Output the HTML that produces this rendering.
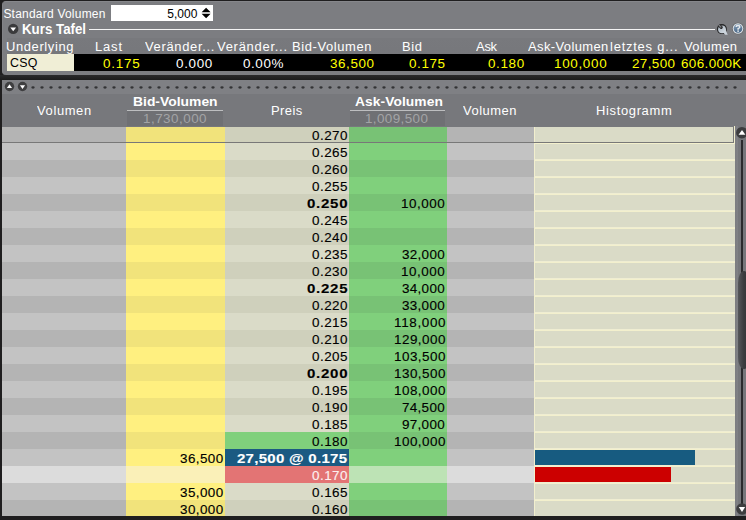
<!DOCTYPE html><html><head><meta charset="utf-8"><style>
*{margin:0;padding:0;box-sizing:border-box}
html,body{width:746px;height:520px;overflow:hidden;background:#1f1e1f;font-family:"Liberation Sans", sans-serif;}
.a{position:absolute}
.t{position:absolute;white-space:pre;font-size:12px;line-height:20px;transform-origin:0 0;}
.b{font-weight:700}
.k{-webkit-text-stroke:0.12px currentColor}
</style></head><body>
<div class="a" style="left:2px;top:1px;width:760px;height:74px;background:#7c7d81;border-radius:4px 0 0 4px;border-top:1px solid #86878b;border-left:1px solid #828387"></div>
<div class="t" style="left:3.4px;top:4px;color:#ffffff;letter-spacing:0.22px;">Standard Volumen</div>
<div class="a" style="left:111px;top:5px;width:102px;height:16px;background:#fff"></div>
<div class="t" style="left:167.2px;top:4px;color:#000000;letter-spacing:0.075px;">5,000</div>
<svg class="a" style="left:200px;top:6px" width="13" height="14"><path d="M1.6 6.2 L6.1 1.8 L10.6 6.2 Z M1.6 7.8 L6.1 12.2 L10.6 7.8 Z" fill="#000"/></svg>
<svg class="a" style="left:7px;top:23px" width="13" height="13"><circle cx="6.2" cy="5.9" r="5.2" fill="#3a3a3c"/><path d="M3.3 4.4 L9.1 4.4 L6.2 8.3 Z" fill="#fff"/></svg>
<div class="t b" style="left:22.2px;top:19px;color:#ffffff;font-size:14px;transform:scaleX(0.95);">Kurs Tafel</div>
<div class="a" style="left:89px;top:29px;width:626px;height:1px;background:#f4f4f4"></div>
<svg class="a" style="left:715px;top:22px" width="14" height="14"><defs><linearGradient id="wg" x1="0" y1="0" x2="1" y2="1"><stop offset="0" stop-color="#a4b0bb"/><stop offset="1" stop-color="#d8dfe6"/></linearGradient><clipPath id="wc"><circle cx="6.9" cy="7.1" r="5.1"/></clipPath></defs><circle cx="6.9" cy="7.1" r="5" fill="#252526"/><path d="M7.6 9.4 L10.4 7.4 L12.7 12.7 L10.2 12.8 Z" fill="#c9d1d9"/><circle cx="7" cy="7.3" r="3.9" fill="url(#wg)"/><g clip-path="url(#wc)"><path d="M6.2 5.4 L1.8 1" stroke="#2a2a2b" stroke-width="3" stroke-linecap="round"/><path d="M5.8 5 L1.4 0.6" stroke="#7c7d81" stroke-width="1.3" stroke-linecap="round"/></g></svg>
<svg class="a" style="left:731px;top:21px" width="14" height="15"><defs><linearGradient id="hg" x1="0" y1="0" x2="0.3" y2="1"><stop offset="0" stop-color="#8aa3ba"/><stop offset="1" stop-color="#4a6888"/></linearGradient></defs><circle cx="7" cy="7.5" r="6" fill="#66686b"/><circle cx="7" cy="7.5" r="5.3" fill="#dde2e6"/><circle cx="7" cy="7.5" r="4.3" fill="url(#hg)"/><path d="M5.2 6.1 Q5.2 4.6 7 4.6 Q8.8 4.6 8.8 6 Q8.8 7 7.1 7.6 L7.1 8.7" fill="none" stroke="#e6eaee" stroke-width="1.5"/><rect x="6.3" y="9.4" width="1.6" height="1.5" fill="#e6eaee"/></svg>
<div class="a" style="left:7px;top:38px;width:739px;height:33px;background:linear-gradient(#78797d,#75767a)"></div>
<div class="t" style="left:6.4px;top:37px;color:#ffffff;letter-spacing:0.568px;transform:scaleX(1.08);">Underlying</div>
<div class="t" style="left:94.6px;top:37px;color:#ffffff;letter-spacing:0.784px;transform:scaleX(1.08);">Last</div>
<div class="t" style="left:144.6px;top:37px;color:#ffffff;letter-spacing:0.614px;transform:scaleX(1.08);">Veränder...</div>
<div class="t" style="left:217.0px;top:37px;color:#ffffff;letter-spacing:0.68px;transform:scaleX(1.08);">Veränder...</div>
<div class="t" style="left:291.9px;top:37px;color:#ffffff;letter-spacing:0.559px;transform:scaleX(1.08);">Bid-Volumen</div>
<div class="t" style="left:402.0px;top:37px;color:#ffffff;letter-spacing:0.565px;transform:scaleX(1.08);">Bid</div>
<div class="t" style="left:476.0px;top:37px;color:#ffffff;letter-spacing:-0.232px;transform:scaleX(1.08);">Ask</div>
<div class="t" style="left:528.1px;top:37px;color:#ffffff;letter-spacing:0.361px;transform:scaleX(1.08);">Ask-Volumen</div>
<div class="t" style="left:610.2px;top:37px;color:#ffffff;letter-spacing:0.713px;transform:scaleX(1.08);">letztes g...</div>
<div class="t" style="left:684.3px;top:37px;color:#ffffff;letter-spacing:0.404px;transform:scaleX(1.08);">Volumen</div>
<div class="a" style="left:7px;top:54px;width:739px;height:17px;background:#000"></div>
<div class="a" style="left:7px;top:54px;width:67px;height:17px;background:#f0eed6"></div>
<div class="t" style="left:10.0px;top:53px;color:#000000;letter-spacing:0.291px;transform:scaleX(1.0308);">CSQ</div>
<div class="t" style="left:102.6px;top:54px;color:#ffff00;letter-spacing:0.67px;transform:scaleX(1.12);">0.175</div>
<div class="t" style="left:176.4px;top:54px;color:#ffffff;letter-spacing:0.602px;transform:scaleX(1.12);">0.000</div>
<div class="t" style="left:243.0px;top:54px;color:#ffffff;letter-spacing:0.517px;transform:scaleX(1.12);">0.00%</div>
<div class="t" style="left:329.8px;top:54px;color:#ffff00;letter-spacing:0.511px;transform:scaleX(1.12);">36,500</div>
<div class="t" style="left:408.6px;top:54px;color:#ffff00;letter-spacing:0.536px;transform:scaleX(1.12);">0.175</div>
<div class="t" style="left:487.8px;top:54px;color:#ffff00;letter-spacing:0.558px;transform:scaleX(1.12);">0.180</div>
<div class="t" style="left:553.9px;top:54px;color:#ffff00;letter-spacing:0.603px;transform:scaleX(1.12);">100,000</div>
<div class="t" style="left:631.5px;top:54px;color:#ffff00;letter-spacing:0.35px;transform:scaleX(1.12);">27,500</div>
<div class="t" style="left:681.4px;top:54px;color:#ffff00;letter-spacing:0.342px;transform:scaleX(1.12);">606.000K</div>
<div class="a" style="left:0;top:75px;width:746px;height:5px;background:linear-gradient(#2a2a2b,#1c1c1c)"></div>
<div class="a" style="left:2px;top:80px;width:760px;height:436px;background:#77787c;overflow:hidden"><div class="a" style="left:0;top:0;width:760px;height:14px;background:#7f8084"></div></div>
<svg class="a" style="left:3px;top:80px" width="26" height="14"><circle cx="6.5" cy="6.5" r="4.7" fill="#3e3e40"/><path d="M3.9 7.9 L9.1 7.9 L6.5 4.3 Z" fill="#fff"/><circle cx="19.5" cy="6.5" r="4.7" fill="#3e3e40"/><path d="M16.9 5.2 L22.1 5.2 L19.5 8.9 Z" fill="#fff"/></svg>
<svg class="a" style="left:0;top:80px" width="746" height="14" viewBox="0 80 746 14"><ellipse cx="33" cy="87.5" rx="1.7" ry="1.15" fill="#333335"/><ellipse cx="42" cy="87.5" rx="1.7" ry="1.15" fill="#333335"/><ellipse cx="51" cy="87.5" rx="1.7" ry="1.15" fill="#333335"/><ellipse cx="60" cy="87.5" rx="1.7" ry="1.15" fill="#333335"/><ellipse cx="69" cy="87.5" rx="1.7" ry="1.15" fill="#333335"/><ellipse cx="78" cy="87.5" rx="1.7" ry="1.15" fill="#333335"/><ellipse cx="87" cy="87.5" rx="1.7" ry="1.15" fill="#333335"/><ellipse cx="96" cy="87.5" rx="1.7" ry="1.15" fill="#333335"/><ellipse cx="105" cy="87.5" rx="1.7" ry="1.15" fill="#333335"/><ellipse cx="114" cy="87.5" rx="1.7" ry="1.15" fill="#333335"/><ellipse cx="123" cy="87.5" rx="1.7" ry="1.15" fill="#333335"/><ellipse cx="132" cy="87.5" rx="1.7" ry="1.15" fill="#333335"/><ellipse cx="141" cy="87.5" rx="1.7" ry="1.15" fill="#333335"/><ellipse cx="150" cy="87.5" rx="1.7" ry="1.15" fill="#333335"/><ellipse cx="159" cy="87.5" rx="1.7" ry="1.15" fill="#333335"/><ellipse cx="168" cy="87.5" rx="1.7" ry="1.15" fill="#333335"/><ellipse cx="177" cy="87.5" rx="1.7" ry="1.15" fill="#333335"/><ellipse cx="186" cy="87.5" rx="1.7" ry="1.15" fill="#333335"/><ellipse cx="195" cy="87.5" rx="1.7" ry="1.15" fill="#333335"/><ellipse cx="204" cy="87.5" rx="1.7" ry="1.15" fill="#333335"/><ellipse cx="213" cy="87.5" rx="1.7" ry="1.15" fill="#333335"/><ellipse cx="222" cy="87.5" rx="1.7" ry="1.15" fill="#333335"/><ellipse cx="231" cy="87.5" rx="1.7" ry="1.15" fill="#333335"/><ellipse cx="240" cy="87.5" rx="1.7" ry="1.15" fill="#333335"/><ellipse cx="249" cy="87.5" rx="1.7" ry="1.15" fill="#333335"/><ellipse cx="258" cy="87.5" rx="1.7" ry="1.15" fill="#333335"/><ellipse cx="267" cy="87.5" rx="1.7" ry="1.15" fill="#333335"/><ellipse cx="276" cy="87.5" rx="1.7" ry="1.15" fill="#333335"/><ellipse cx="285" cy="87.5" rx="1.7" ry="1.15" fill="#333335"/><ellipse cx="294" cy="87.5" rx="1.7" ry="1.15" fill="#333335"/><ellipse cx="303" cy="87.5" rx="1.7" ry="1.15" fill="#333335"/><ellipse cx="312" cy="87.5" rx="1.7" ry="1.15" fill="#333335"/><ellipse cx="321" cy="87.5" rx="1.7" ry="1.15" fill="#333335"/><ellipse cx="330" cy="87.5" rx="1.7" ry="1.15" fill="#333335"/><ellipse cx="339" cy="87.5" rx="1.7" ry="1.15" fill="#333335"/><ellipse cx="348" cy="87.5" rx="1.7" ry="1.15" fill="#333335"/><ellipse cx="357" cy="87.5" rx="1.7" ry="1.15" fill="#333335"/><ellipse cx="366" cy="87.5" rx="1.7" ry="1.15" fill="#333335"/><ellipse cx="375" cy="87.5" rx="1.7" ry="1.15" fill="#333335"/><ellipse cx="384" cy="87.5" rx="1.7" ry="1.15" fill="#333335"/><ellipse cx="393" cy="87.5" rx="1.7" ry="1.15" fill="#333335"/><ellipse cx="402" cy="87.5" rx="1.7" ry="1.15" fill="#333335"/><ellipse cx="411" cy="87.5" rx="1.7" ry="1.15" fill="#333335"/><ellipse cx="420" cy="87.5" rx="1.7" ry="1.15" fill="#333335"/><ellipse cx="429" cy="87.5" rx="1.7" ry="1.15" fill="#333335"/><ellipse cx="438" cy="87.5" rx="1.7" ry="1.15" fill="#333335"/><ellipse cx="447" cy="87.5" rx="1.7" ry="1.15" fill="#333335"/><ellipse cx="456" cy="87.5" rx="1.7" ry="1.15" fill="#333335"/><ellipse cx="465" cy="87.5" rx="1.7" ry="1.15" fill="#333335"/><ellipse cx="474" cy="87.5" rx="1.7" ry="1.15" fill="#333335"/><ellipse cx="483" cy="87.5" rx="1.7" ry="1.15" fill="#333335"/><ellipse cx="492" cy="87.5" rx="1.7" ry="1.15" fill="#333335"/><ellipse cx="501" cy="87.5" rx="1.7" ry="1.15" fill="#333335"/><ellipse cx="510" cy="87.5" rx="1.7" ry="1.15" fill="#333335"/><ellipse cx="519" cy="87.5" rx="1.7" ry="1.15" fill="#333335"/><ellipse cx="528" cy="87.5" rx="1.7" ry="1.15" fill="#333335"/><ellipse cx="537" cy="87.5" rx="1.7" ry="1.15" fill="#333335"/><ellipse cx="546" cy="87.5" rx="1.7" ry="1.15" fill="#333335"/><ellipse cx="555" cy="87.5" rx="1.7" ry="1.15" fill="#333335"/><ellipse cx="564" cy="87.5" rx="1.7" ry="1.15" fill="#333335"/><ellipse cx="573" cy="87.5" rx="1.7" ry="1.15" fill="#333335"/><ellipse cx="582" cy="87.5" rx="1.7" ry="1.15" fill="#333335"/><ellipse cx="591" cy="87.5" rx="1.7" ry="1.15" fill="#333335"/><ellipse cx="600" cy="87.5" rx="1.7" ry="1.15" fill="#333335"/><ellipse cx="609" cy="87.5" rx="1.7" ry="1.15" fill="#333335"/><ellipse cx="618" cy="87.5" rx="1.7" ry="1.15" fill="#333335"/><ellipse cx="627" cy="87.5" rx="1.7" ry="1.15" fill="#333335"/><ellipse cx="636" cy="87.5" rx="1.7" ry="1.15" fill="#333335"/><ellipse cx="645" cy="87.5" rx="1.7" ry="1.15" fill="#333335"/><ellipse cx="654" cy="87.5" rx="1.7" ry="1.15" fill="#333335"/><ellipse cx="663" cy="87.5" rx="1.7" ry="1.15" fill="#333335"/><ellipse cx="672" cy="87.5" rx="1.7" ry="1.15" fill="#333335"/><ellipse cx="681" cy="87.5" rx="1.7" ry="1.15" fill="#333335"/><ellipse cx="690" cy="87.5" rx="1.7" ry="1.15" fill="#333335"/><ellipse cx="699" cy="87.5" rx="1.7" ry="1.15" fill="#333335"/><ellipse cx="708" cy="87.5" rx="1.7" ry="1.15" fill="#333335"/><ellipse cx="717" cy="87.5" rx="1.7" ry="1.15" fill="#333335"/><ellipse cx="726" cy="87.5" rx="1.7" ry="1.15" fill="#333335"/><ellipse cx="735" cy="87.5" rx="1.7" ry="1.15" fill="#333335"/></svg>
<div class="t" style="left:37.1px;top:101px;color:#ffffff;letter-spacing:0.574px;transform:scaleX(1.08);">Volumen</div>
<div class="t" style="left:271.1px;top:101px;color:#ffffff;letter-spacing:0.397px;transform:scaleX(1.08);">Preis</div>
<div class="t" style="left:463.0px;top:101px;color:#ffffff;letter-spacing:0.481px;transform:scaleX(1.08);">Volumen</div>
<div class="t" style="left:596.3px;top:101px;color:#ffffff;letter-spacing:0.603px;transform:scaleX(1.08);">Histogramm</div>
<div class="a" style="left:127px;top:110px;width:96px;height:16px;background:#6f7074;border-top:1px solid #bdbec0"></div>
<div class="a" style="left:350px;top:110px;width:95px;height:16px;background:#6f7074;border-top:1px solid #bdbec0"></div>
<div class="t b" style="left:132.5px;top:92px;color:#ffffff;font-size:13px;letter-spacing:0.018px;transform:scaleX(1.0654);">Bid-Volumen</div>
<div class="t b" style="left:354.5px;top:92px;color:#ffffff;font-size:13px;letter-spacing:0.076px;transform:scaleX(1.0598);">Ask-Volumen</div>
<div class="t" style="left:143.3px;top:109px;color:#a3a4a6;letter-spacing:0.42px;transform:scaleX(1.12);">1,730,000</div>
<div class="t" style="left:365.4px;top:109px;color:#a3a4a6;letter-spacing:0.342px;transform:scaleX(1.12);">1,009,500</div>
<div class="a" style="left:2px;top:127px;width:124px;height:15px;background:#b4b4b4"></div>
<div class="a" style="left:126px;top:127px;width:99px;height:15px;background:#f1e37b"></div>
<div class="a" style="left:225px;top:127px;width:124px;height:15px;background:#cfd0bc"></div>
<div class="a" style="left:349px;top:127px;width:98px;height:15px;background:#78c275"></div>
<div class="a" style="left:447px;top:127px;width:87px;height:15px;background:#b4b4b4"></div>
<div class="a" style="left:2px;top:143px;width:124px;height:17px;background:#c3c3c3"></div>
<div class="a" style="left:126px;top:143px;width:99px;height:17px;background:#fff080"></div>
<div class="a" style="left:225px;top:143px;width:124px;height:17px;background:#dadbc8"></div>
<div class="a" style="left:349px;top:143px;width:98px;height:17px;background:#80d07c"></div>
<div class="a" style="left:447px;top:143px;width:87px;height:17px;background:#c3c3c3"></div>
<div class="a" style="left:2px;top:160px;width:124px;height:17px;background:#b4b4b4"></div>
<div class="a" style="left:126px;top:160px;width:99px;height:17px;background:#f1e37b"></div>
<div class="a" style="left:225px;top:160px;width:124px;height:17px;background:#cfd0bc"></div>
<div class="a" style="left:349px;top:160px;width:98px;height:17px;background:#78c275"></div>
<div class="a" style="left:447px;top:160px;width:87px;height:17px;background:#b4b4b4"></div>
<div class="a" style="left:2px;top:177px;width:124px;height:17px;background:#c3c3c3"></div>
<div class="a" style="left:126px;top:177px;width:99px;height:17px;background:#fff080"></div>
<div class="a" style="left:225px;top:177px;width:124px;height:17px;background:#dadbc8"></div>
<div class="a" style="left:349px;top:177px;width:98px;height:17px;background:#80d07c"></div>
<div class="a" style="left:447px;top:177px;width:87px;height:17px;background:#c3c3c3"></div>
<div class="a" style="left:2px;top:194px;width:124px;height:17px;background:#b4b4b4"></div>
<div class="a" style="left:126px;top:194px;width:99px;height:17px;background:#f1e37b"></div>
<div class="a" style="left:225px;top:194px;width:124px;height:17px;background:#cfd0bc"></div>
<div class="a" style="left:349px;top:194px;width:98px;height:17px;background:#78c275"></div>
<div class="a" style="left:447px;top:194px;width:87px;height:17px;background:#b4b4b4"></div>
<div class="a" style="left:2px;top:211px;width:124px;height:17px;background:#c3c3c3"></div>
<div class="a" style="left:126px;top:211px;width:99px;height:17px;background:#fff080"></div>
<div class="a" style="left:225px;top:211px;width:124px;height:17px;background:#dadbc8"></div>
<div class="a" style="left:349px;top:211px;width:98px;height:17px;background:#80d07c"></div>
<div class="a" style="left:447px;top:211px;width:87px;height:17px;background:#c3c3c3"></div>
<div class="a" style="left:2px;top:228px;width:124px;height:17px;background:#b4b4b4"></div>
<div class="a" style="left:126px;top:228px;width:99px;height:17px;background:#f1e37b"></div>
<div class="a" style="left:225px;top:228px;width:124px;height:17px;background:#cfd0bc"></div>
<div class="a" style="left:349px;top:228px;width:98px;height:17px;background:#78c275"></div>
<div class="a" style="left:447px;top:228px;width:87px;height:17px;background:#b4b4b4"></div>
<div class="a" style="left:2px;top:245px;width:124px;height:17px;background:#c3c3c3"></div>
<div class="a" style="left:126px;top:245px;width:99px;height:17px;background:#fff080"></div>
<div class="a" style="left:225px;top:245px;width:124px;height:17px;background:#dadbc8"></div>
<div class="a" style="left:349px;top:245px;width:98px;height:17px;background:#80d07c"></div>
<div class="a" style="left:447px;top:245px;width:87px;height:17px;background:#c3c3c3"></div>
<div class="a" style="left:2px;top:262px;width:124px;height:17px;background:#b4b4b4"></div>
<div class="a" style="left:126px;top:262px;width:99px;height:17px;background:#f1e37b"></div>
<div class="a" style="left:225px;top:262px;width:124px;height:17px;background:#cfd0bc"></div>
<div class="a" style="left:349px;top:262px;width:98px;height:17px;background:#78c275"></div>
<div class="a" style="left:447px;top:262px;width:87px;height:17px;background:#b4b4b4"></div>
<div class="a" style="left:2px;top:279px;width:124px;height:17px;background:#c3c3c3"></div>
<div class="a" style="left:126px;top:279px;width:99px;height:17px;background:#fff080"></div>
<div class="a" style="left:225px;top:279px;width:124px;height:17px;background:#dadbc8"></div>
<div class="a" style="left:349px;top:279px;width:98px;height:17px;background:#80d07c"></div>
<div class="a" style="left:447px;top:279px;width:87px;height:17px;background:#c3c3c3"></div>
<div class="a" style="left:2px;top:296px;width:124px;height:17px;background:#b4b4b4"></div>
<div class="a" style="left:126px;top:296px;width:99px;height:17px;background:#f1e37b"></div>
<div class="a" style="left:225px;top:296px;width:124px;height:17px;background:#cfd0bc"></div>
<div class="a" style="left:349px;top:296px;width:98px;height:17px;background:#78c275"></div>
<div class="a" style="left:447px;top:296px;width:87px;height:17px;background:#b4b4b4"></div>
<div class="a" style="left:2px;top:313px;width:124px;height:17px;background:#c3c3c3"></div>
<div class="a" style="left:126px;top:313px;width:99px;height:17px;background:#fff080"></div>
<div class="a" style="left:225px;top:313px;width:124px;height:17px;background:#dadbc8"></div>
<div class="a" style="left:349px;top:313px;width:98px;height:17px;background:#80d07c"></div>
<div class="a" style="left:447px;top:313px;width:87px;height:17px;background:#c3c3c3"></div>
<div class="a" style="left:2px;top:330px;width:124px;height:17px;background:#b4b4b4"></div>
<div class="a" style="left:126px;top:330px;width:99px;height:17px;background:#f1e37b"></div>
<div class="a" style="left:225px;top:330px;width:124px;height:17px;background:#cfd0bc"></div>
<div class="a" style="left:349px;top:330px;width:98px;height:17px;background:#78c275"></div>
<div class="a" style="left:447px;top:330px;width:87px;height:17px;background:#b4b4b4"></div>
<div class="a" style="left:2px;top:347px;width:124px;height:17px;background:#c3c3c3"></div>
<div class="a" style="left:126px;top:347px;width:99px;height:17px;background:#fff080"></div>
<div class="a" style="left:225px;top:347px;width:124px;height:17px;background:#dadbc8"></div>
<div class="a" style="left:349px;top:347px;width:98px;height:17px;background:#80d07c"></div>
<div class="a" style="left:447px;top:347px;width:87px;height:17px;background:#c3c3c3"></div>
<div class="a" style="left:2px;top:364px;width:124px;height:17px;background:#b4b4b4"></div>
<div class="a" style="left:126px;top:364px;width:99px;height:17px;background:#f1e37b"></div>
<div class="a" style="left:225px;top:364px;width:124px;height:17px;background:#cfd0bc"></div>
<div class="a" style="left:349px;top:364px;width:98px;height:17px;background:#78c275"></div>
<div class="a" style="left:447px;top:364px;width:87px;height:17px;background:#b4b4b4"></div>
<div class="a" style="left:2px;top:381px;width:124px;height:17px;background:#c3c3c3"></div>
<div class="a" style="left:126px;top:381px;width:99px;height:17px;background:#fff080"></div>
<div class="a" style="left:225px;top:381px;width:124px;height:17px;background:#dadbc8"></div>
<div class="a" style="left:349px;top:381px;width:98px;height:17px;background:#80d07c"></div>
<div class="a" style="left:447px;top:381px;width:87px;height:17px;background:#c3c3c3"></div>
<div class="a" style="left:2px;top:398px;width:124px;height:17px;background:#b4b4b4"></div>
<div class="a" style="left:126px;top:398px;width:99px;height:17px;background:#f1e37b"></div>
<div class="a" style="left:225px;top:398px;width:124px;height:17px;background:#cfd0bc"></div>
<div class="a" style="left:349px;top:398px;width:98px;height:17px;background:#78c275"></div>
<div class="a" style="left:447px;top:398px;width:87px;height:17px;background:#b4b4b4"></div>
<div class="a" style="left:2px;top:415px;width:124px;height:17px;background:#c3c3c3"></div>
<div class="a" style="left:126px;top:415px;width:99px;height:17px;background:#fff080"></div>
<div class="a" style="left:225px;top:415px;width:124px;height:17px;background:#dadbc8"></div>
<div class="a" style="left:349px;top:415px;width:98px;height:17px;background:#80d07c"></div>
<div class="a" style="left:447px;top:415px;width:87px;height:17px;background:#c3c3c3"></div>
<div class="a" style="left:2px;top:432px;width:124px;height:17px;background:#b4b4b4"></div>
<div class="a" style="left:126px;top:432px;width:99px;height:17px;background:#f1e37b"></div>
<div class="a" style="left:225px;top:432px;width:124px;height:17px;background:#80d07c"></div>
<div class="a" style="left:349px;top:432px;width:98px;height:17px;background:#78c275"></div>
<div class="a" style="left:447px;top:432px;width:87px;height:17px;background:#b4b4b4"></div>
<div class="a" style="left:2px;top:449px;width:124px;height:17px;background:#c3c3c3"></div>
<div class="a" style="left:126px;top:449px;width:99px;height:17px;background:#fff080"></div>
<div class="a" style="left:225px;top:449px;width:124px;height:17px;background:#1b5a82"></div>
<div class="a" style="left:349px;top:449px;width:98px;height:17px;background:#80d07c"></div>
<div class="a" style="left:447px;top:449px;width:87px;height:17px;background:#c3c3c3"></div>
<div class="a" style="left:2px;top:466px;width:124px;height:17px;background:#dcdcdc"></div>
<div class="a" style="left:126px;top:466px;width:99px;height:17px;background:#faf0b8"></div>
<div class="a" style="left:225px;top:466px;width:124px;height:17px;background:#e37474"></div>
<div class="a" style="left:349px;top:466px;width:98px;height:17px;background:#bde3b5"></div>
<div class="a" style="left:447px;top:466px;width:87px;height:17px;background:#dcdcdc"></div>
<div class="a" style="left:2px;top:483px;width:124px;height:17px;background:#c3c3c3"></div>
<div class="a" style="left:126px;top:483px;width:99px;height:17px;background:#fff080"></div>
<div class="a" style="left:225px;top:483px;width:124px;height:17px;background:#dadbc8"></div>
<div class="a" style="left:349px;top:483px;width:98px;height:17px;background:#80d07c"></div>
<div class="a" style="left:447px;top:483px;width:87px;height:17px;background:#c3c3c3"></div>
<div class="a" style="left:2px;top:500px;width:124px;height:16px;background:#b4b4b4"></div>
<div class="a" style="left:126px;top:500px;width:99px;height:16px;background:#f1e37b"></div>
<div class="a" style="left:225px;top:500px;width:124px;height:16px;background:#cfd0bc"></div>
<div class="a" style="left:349px;top:500px;width:98px;height:16px;background:#78c275"></div>
<div class="a" style="left:447px;top:500px;width:87px;height:16px;background:#b4b4b4"></div>
<div class="a" style="left:534px;top:127px;width:201px;height:389px;background:#dadbc7"></div>
<div class="a" style="left:734px;top:126px;width:1px;height:17px;background:#f2efce"></div>
<div class="a" style="left:534px;top:127px;width:1px;height:389px;background:#f2efce"></div>
<div class="a" style="left:534px;top:143px;width:201px;height:1px;background:#f3f0cd"></div>
<div class="a" style="left:534px;top:159px;width:201px;height:1px;background:#efedd2"></div>
<div class="a" style="left:534px;top:160px;width:201px;height:1px;background:#f3f0cd"></div>
<div class="a" style="left:534px;top:176px;width:201px;height:1px;background:#efedd2"></div>
<div class="a" style="left:534px;top:177px;width:201px;height:1px;background:#f3f0cd"></div>
<div class="a" style="left:534px;top:193px;width:201px;height:1px;background:#efedd2"></div>
<div class="a" style="left:534px;top:194px;width:201px;height:1px;background:#f3f0cd"></div>
<div class="a" style="left:534px;top:210px;width:201px;height:1px;background:#efedd2"></div>
<div class="a" style="left:534px;top:211px;width:201px;height:1px;background:#f3f0cd"></div>
<div class="a" style="left:534px;top:227px;width:201px;height:1px;background:#efedd2"></div>
<div class="a" style="left:534px;top:228px;width:201px;height:1px;background:#f3f0cd"></div>
<div class="a" style="left:534px;top:244px;width:201px;height:1px;background:#efedd2"></div>
<div class="a" style="left:534px;top:245px;width:201px;height:1px;background:#f3f0cd"></div>
<div class="a" style="left:534px;top:261px;width:201px;height:1px;background:#efedd2"></div>
<div class="a" style="left:534px;top:262px;width:201px;height:1px;background:#f3f0cd"></div>
<div class="a" style="left:534px;top:278px;width:201px;height:1px;background:#efedd2"></div>
<div class="a" style="left:534px;top:279px;width:201px;height:1px;background:#f3f0cd"></div>
<div class="a" style="left:534px;top:295px;width:201px;height:1px;background:#efedd2"></div>
<div class="a" style="left:534px;top:296px;width:201px;height:1px;background:#f3f0cd"></div>
<div class="a" style="left:534px;top:312px;width:201px;height:1px;background:#efedd2"></div>
<div class="a" style="left:534px;top:313px;width:201px;height:1px;background:#f3f0cd"></div>
<div class="a" style="left:534px;top:329px;width:201px;height:1px;background:#efedd2"></div>
<div class="a" style="left:534px;top:330px;width:201px;height:1px;background:#f3f0cd"></div>
<div class="a" style="left:534px;top:346px;width:201px;height:1px;background:#efedd2"></div>
<div class="a" style="left:534px;top:347px;width:201px;height:1px;background:#f3f0cd"></div>
<div class="a" style="left:534px;top:363px;width:201px;height:1px;background:#efedd2"></div>
<div class="a" style="left:534px;top:364px;width:201px;height:1px;background:#f3f0cd"></div>
<div class="a" style="left:534px;top:380px;width:201px;height:1px;background:#efedd2"></div>
<div class="a" style="left:534px;top:381px;width:201px;height:1px;background:#f3f0cd"></div>
<div class="a" style="left:534px;top:397px;width:201px;height:1px;background:#efedd2"></div>
<div class="a" style="left:534px;top:398px;width:201px;height:1px;background:#f3f0cd"></div>
<div class="a" style="left:534px;top:414px;width:201px;height:1px;background:#efedd2"></div>
<div class="a" style="left:534px;top:415px;width:201px;height:1px;background:#f3f0cd"></div>
<div class="a" style="left:534px;top:431px;width:201px;height:1px;background:#efedd2"></div>
<div class="a" style="left:534px;top:432px;width:201px;height:1px;background:#f3f0cd"></div>
<div class="a" style="left:534px;top:448px;width:201px;height:1px;background:#efedd2"></div>
<div class="a" style="left:534px;top:449px;width:201px;height:1px;background:#f3f0cd"></div>
<div class="a" style="left:534px;top:465px;width:201px;height:1px;background:#efedd2"></div>
<div class="a" style="left:534px;top:466px;width:201px;height:1px;background:#f3f0cd"></div>
<div class="a" style="left:534px;top:482px;width:201px;height:1px;background:#efedd2"></div>
<div class="a" style="left:534px;top:483px;width:201px;height:1px;background:#f3f0cd"></div>
<div class="a" style="left:534px;top:499px;width:201px;height:1px;background:#efedd2"></div>
<div class="a" style="left:534px;top:500px;width:201px;height:1px;background:#f3f0cd"></div>
<div class="t k" style="left:311.7px;top:126px;color:#000000;letter-spacing:0.424px;transform:scaleX(1.12);">0.270</div>
<div class="t k" style="left:311.7px;top:143px;color:#000000;letter-spacing:0.424px;transform:scaleX(1.12);">0.265</div>
<div class="t k" style="left:311.7px;top:160px;color:#000000;letter-spacing:0.424px;transform:scaleX(1.12);">0.260</div>
<div class="t k" style="left:311.7px;top:177px;color:#000000;letter-spacing:0.424px;transform:scaleX(1.12);">0.255</div>
<div class="t b k" style="left:307.3px;top:194px;color:#000000;letter-spacing:0.6px;transform:scaleX(1.25);">0.250</div>
<div class="t k" style="left:401.4px;top:194px;color:#000000;letter-spacing:0.479px;transform:scaleX(1.12);">10,000</div>
<div class="t k" style="left:311.7px;top:211px;color:#000000;letter-spacing:0.424px;transform:scaleX(1.12);">0.245</div>
<div class="t k" style="left:311.7px;top:228px;color:#000000;letter-spacing:0.424px;transform:scaleX(1.12);">0.240</div>
<div class="t k" style="left:311.7px;top:245px;color:#000000;letter-spacing:0.424px;transform:scaleX(1.12);">0.235</div>
<div class="t k" style="left:402.4px;top:245px;color:#000000;letter-spacing:0.279px;transform:scaleX(1.12);">32,000</div>
<div class="t k" style="left:311.7px;top:262px;color:#000000;letter-spacing:0.424px;transform:scaleX(1.12);">0.230</div>
<div class="t k" style="left:401.4px;top:262px;color:#000000;letter-spacing:0.479px;transform:scaleX(1.12);">10,000</div>
<div class="t b k" style="left:307.3px;top:279px;color:#000000;letter-spacing:0.6px;transform:scaleX(1.25);">0.225</div>
<div class="t k" style="left:402.4px;top:279px;color:#000000;letter-spacing:0.279px;transform:scaleX(1.12);">34,000</div>
<div class="t k" style="left:311.7px;top:296px;color:#000000;letter-spacing:0.424px;transform:scaleX(1.12);">0.220</div>
<div class="t k" style="left:402.4px;top:296px;color:#000000;letter-spacing:0.279px;transform:scaleX(1.12);">33,000</div>
<div class="t k" style="left:311.7px;top:313px;color:#000000;letter-spacing:0.424px;transform:scaleX(1.12);">0.215</div>
<div class="t k" style="left:393.77px;top:313px;color:#000000;letter-spacing:0.591px;transform:scaleX(1.12);">118,000</div>
<div class="t k" style="left:311.7px;top:330px;color:#000000;letter-spacing:0.424px;transform:scaleX(1.12);">0.210</div>
<div class="t k" style="left:393.77px;top:330px;color:#000000;letter-spacing:0.424px;transform:scaleX(1.12);">129,000</div>
<div class="t k" style="left:311.7px;top:347px;color:#000000;letter-spacing:0.424px;transform:scaleX(1.12);">0.205</div>
<div class="t k" style="left:393.77px;top:347px;color:#000000;letter-spacing:0.424px;transform:scaleX(1.12);">103,500</div>
<div class="t b k" style="left:307.3px;top:364px;color:#000000;letter-spacing:0.6px;transform:scaleX(1.25);">0.200</div>
<div class="t k" style="left:393.77px;top:364px;color:#000000;letter-spacing:0.424px;transform:scaleX(1.12);">130,500</div>
<div class="t k" style="left:311.7px;top:381px;color:#000000;letter-spacing:0.424px;transform:scaleX(1.12);">0.195</div>
<div class="t k" style="left:393.77px;top:381px;color:#000000;letter-spacing:0.424px;transform:scaleX(1.12);">108,000</div>
<div class="t k" style="left:311.7px;top:398px;color:#000000;letter-spacing:0.424px;transform:scaleX(1.12);">0.190</div>
<div class="t k" style="left:402.4px;top:398px;color:#000000;letter-spacing:0.279px;transform:scaleX(1.12);">74,500</div>
<div class="t k" style="left:311.7px;top:415px;color:#000000;letter-spacing:0.424px;transform:scaleX(1.12);">0.185</div>
<div class="t k" style="left:402.4px;top:415px;color:#000000;letter-spacing:0.279px;transform:scaleX(1.12);">97,000</div>
<div class="t k" style="left:311.7px;top:432px;color:#000000;letter-spacing:0.424px;transform:scaleX(1.12);">0.180</div>
<div class="t k" style="left:393.77px;top:432px;color:#000000;letter-spacing:0.424px;transform:scaleX(1.12);">100,000</div>
<div class="t b k" style="left:236.9px;top:449px;color:#ffffff;letter-spacing:0.224px;transform:scaleX(1.25);">27,500 @ 0.175</div>
<div class="t k" style="left:179.8px;top:449px;color:#000000;letter-spacing:0.368px;transform:scaleX(1.12);">36,500</div>
<div class="t k" style="left:311.7px;top:466px;color:#fdf0f0;letter-spacing:0.424px;transform:scaleX(1.12);">0.170</div>
<div class="t k" style="left:311.7px;top:483px;color:#000000;letter-spacing:0.424px;transform:scaleX(1.12);">0.165</div>
<div class="t k" style="left:179.8px;top:483px;color:#000000;letter-spacing:0.368px;transform:scaleX(1.12);">35,000</div>
<div class="t k" style="left:311.7px;top:500px;color:#000000;letter-spacing:0.424px;transform:scaleX(1.12);">0.160</div>
<div class="t k" style="left:179.8px;top:500px;color:#000000;letter-spacing:0.368px;transform:scaleX(1.12);">30,000</div>
<div class="a" style="left:2px;top:142px;width:731px;height:1px;background:#787878"></div>
<div class="a" style="left:733px;top:127px;width:1px;height:16px;background:#787878"></div>
<div class="a" style="left:535px;top:450px;width:160px;height:15px;background:#175b80"></div>
<div class="a" style="left:535px;top:467px;width:136px;height:15px;background:#cc0000"></div>
<div class="a" style="left:735px;top:126px;width:11px;height:390px;background:#76777b"></div>
<div class="a" style="left:735px;top:126px;width:3px;height:390px;background:linear-gradient(to right,#7b7c80,#808185)"></div>
<div class="a" style="left:741px;top:140px;width:2px;height:364px;background:#2a2a2c"></div>
<div class="a" style="left:738px;top:271px;width:12px;height:98px;background:linear-gradient(to right,#56575b,#3c3d40 45%,#2e2f31);border-radius:6px/12px"></div>
<svg class="a" style="left:735px;top:126px" width="11" height="14"><circle cx="6.9" cy="6.7" r="5.8" fill="#3c3c3e"/><path d="M3.6 8.8 L10.4 8.8 L7 4 Z" fill="#fff"/></svg>
<svg class="a" style="left:735px;top:502px" width="11" height="14"><circle cx="7" cy="7" r="5.8" fill="#3e3e40"/><path d="M3.8 5 L10.1 5 L7 10 Z" fill="#fff"/></svg>
</body></html>
